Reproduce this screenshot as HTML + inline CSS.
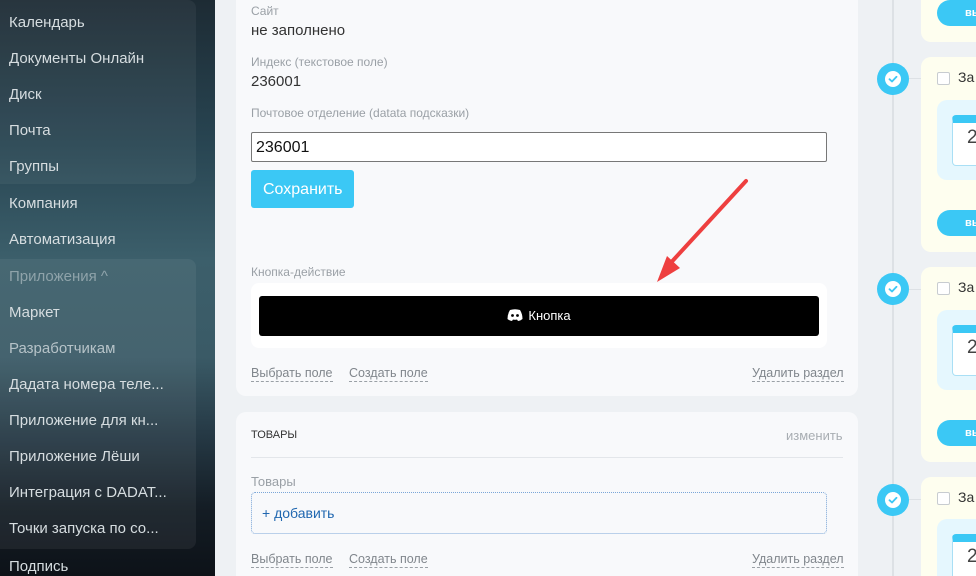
<!DOCTYPE html>
<html><head><meta charset="utf-8"><style>
*{box-sizing:border-box;margin:0;padding:0}
html,body{width:976px;height:576px;overflow:hidden}
body{background:#eef1f4;font-family:"Liberation Sans",sans-serif;position:relative}
#sb{position:absolute;left:0;top:0;width:215px;height:576px;background:linear-gradient(180deg,#1d2b34 0%,#284552 25%,#3c5f6b 45%,#3a5a66 62%,#263a46 75%,#141d25 88%,#0d1218 100%)}
.pan{position:absolute;left:0;width:196px;background:rgba(255,255,255,0.05);border-radius:0 8px 8px 0}
.si{position:absolute;left:9px;font-size:15px;color:#d6dde0;white-space:nowrap}
.card{position:absolute;left:236px;width:622px;background:#f8f9fb;border-radius:10px}
.lbl{position:absolute;left:251px;font-size:12px;color:#9aa0a6}
.val{position:absolute;left:251px;font-size:15px;color:#333}
.lnk{position:absolute;font-size:12.5px;color:#80868c;border-bottom:1px dashed #9aa0a6;line-height:15px}
.yc{position:absolute;left:921px;width:80px;background:#fefeef;border-radius:10px}
.circ{position:absolute;left:877px;width:32px;height:32px;border-radius:50%;background:#3bc8f5}
.circ svg{position:absolute;left:7px;top:7px}
.bb{position:absolute;left:937px;width:60px;height:26px;border-radius:13px;background:#3bc8f5;color:#fff;font-size:11px;font-weight:bold;padding:7px 0 0 28px}
.cb{position:absolute;left:937px;width:13px;height:13px;border:1px solid #c8ccd0;border-radius:2px;background:#fff}
.za{position:absolute;left:958px;font-size:14px;color:#333}
.ib{position:absolute;left:937px;width:60px;height:80px;background:#e5f7fe;border-radius:10px}
.cal{position:absolute;left:952px;width:40px;height:51px;border:1px solid #a9dff5;border-top:8px solid #3bc8f5;border-radius:4px;background:#fff;font-size:19px;color:#444;padding:5px 0 0 14px;line-height:19px}
</style></head><body>
<div id="sb">
<div class="pan" style="top:0;height:184px"></div>
<div class="pan" style="top:259px;height:290px;background:rgba(255,255,255,0.06)"></div>
<div class="si" style="top:14px">Календарь</div>
<div class="si" style="top:50px">Документы Онлайн</div>
<div class="si" style="top:86px">Диск</div>
<div class="si" style="top:122px">Почта</div>
<div class="si" style="top:158px">Группы</div>
<div class="si" style="top:195px">Компания</div>
<div class="si" style="top:231px">Автоматизация</div>
<div class="si" style="top:268px;color:#8fa3aa">Приложения ^</div>
<div class="si" style="top:304px">Маркет</div>
<div class="si" style="top:340px;color:#b6c3c8">Разработчикам</div>
<div class="si" style="top:376px">Дадата номера теле...</div>
<div class="si" style="top:412px">Приложение для кн...</div>
<div class="si" style="top:448px">Приложение Лёши</div>
<div class="si" style="top:484px">Интеграция с DADAT...</div>
<div class="si" style="top:520px">Точки запуска по со...</div>
<div class="si" style="top:558px">Подпись</div>
</div>

<div class="card" style="top:-10px;height:406px"></div>
<div class="lbl" style="top:4px">Сайт</div>
<div class="val" style="top:22px">не заполнено</div>
<div class="lbl" style="top:55px">Индекс (текстовое поле)</div>
<div class="val" style="top:73px">236001</div>
<div class="lbl" style="top:106px">Почтовое отделение (datata подсказки)</div>
<div style="position:absolute;left:251px;top:132px;width:576px;height:30px;border:1px solid #777;border-radius:2px;background:#fff;font-size:16px;color:#111;padding:6px 4px">236001</div>
<div style="position:absolute;left:251px;top:170px;width:103px;height:38px;border-radius:3px;background:#3bc8f5;color:#fff;font-size:16px;padding:11px 0 0 12px">Сохранить</div>
<svg style="position:absolute;left:0;top:0" width="976" height="576"><line x1="746" y1="181" x2="666" y2="268" stroke="#ee3f3f" stroke-width="4" stroke-linecap="round"/><polygon points="657,282 667,256 680,268" fill="#ee3f3f"/></svg>
<div class="lbl" style="top:265px">Кнопка-действие</div>
<div style="position:absolute;left:251px;top:283px;width:576px;height:65px;background:#fff;border-radius:8px"></div>
<div style="position:absolute;left:259px;top:296px;width:560px;height:40px;background:#000;border-radius:3px;color:#fff;font-size:13px;text-align:center;line-height:40px"><svg width="16" height="12" viewBox="0 0 16 12" style="vertical-align:-1px;margin-right:5px"><path d="M3 1 Q8 -0.5 13 1 Q15.5 5 15.5 10 Q13.5 11.8 11 12 L10 10.5 Q8 11 6 10.5 L5 12 Q2.5 11.8 0.5 10 Q0.5 5 3 1Z" fill="#fff"/><circle cx="5.5" cy="6.5" r="1.4" fill="#000"/><circle cx="10.5" cy="6.5" r="1.4" fill="#000"/></svg>Кнопка</div>
<div class="lnk" style="left:251px;top:366px">Выбрать поле</div>
<div class="lnk" style="left:349px;top:366px">Создать поле</div>
<div class="lnk" style="left:752px;top:366px">Удалить раздел</div>

<div class="card" style="top:412px;height:180px"></div>
<div style="position:absolute;left:251px;top:429px;font-size:11px;color:#333">ТОВАРЫ</div>
<div style="position:absolute;left:786px;top:428px;font-size:13px;color:#a8adb2">изменить</div>
<div style="position:absolute;left:251px;top:457px;width:592px;height:1px;background:#e3e6ea"></div>
<div class="lbl" style="top:474px;font-size:13px">Товары</div>
<div style="position:absolute;left:251px;top:492px;width:576px;height:42px;border:1px dotted #7aa6d8;border-radius:4px;font-size:14px;color:#2067b0;padding:12px 0 0 10px">+ добавить</div>
<div class="lnk" style="left:251px;top:552px">Выбрать поле</div>
<div class="lnk" style="left:349px;top:552px">Создать поле</div>
<div class="lnk" style="left:752px;top:552px">Удалить раздел</div>

<div style="position:absolute;left:892px;top:0;width:2px;height:576px;background:#dde1e5"></div>
<div style="position:absolute;left:909px;top:78px;width:12px;height:1px;background:#dde1e5"></div>
<div style="position:absolute;left:909px;top:289px;width:12px;height:1px;background:#dde1e5"></div>
<div style="position:absolute;left:909px;top:499px;width:12px;height:1px;background:#dde1e5"></div>
<div class="yc" style="top:-10px;height:52px"></div>
<div class="bb" style="top:0">вы</div>
<div class="yc" style="top:57px;height:195px"></div>
<div class="yc" style="top:267px;height:195px"></div>
<div class="yc" style="top:477px;height:120px"></div>
<div class="circ" style="top:63px"><svg width="18" height="18"><circle cx="9" cy="9" r="8" fill="#fff"/><path d="M5.5 9.2 L8 11.5 L12.5 6.8" stroke="#3bc8f5" stroke-width="1.8" fill="none" stroke-linecap="round" stroke-linejoin="round"/></svg></div>
<div class="circ" style="top:273px"><svg width="18" height="18"><circle cx="9" cy="9" r="8" fill="#fff"/><path d="M5.5 9.2 L8 11.5 L12.5 6.8" stroke="#3bc8f5" stroke-width="1.8" fill="none" stroke-linecap="round" stroke-linejoin="round"/></svg></div>
<div class="circ" style="top:484px"><svg width="18" height="18"><circle cx="9" cy="9" r="8" fill="#fff"/><path d="M5.5 9.2 L8 11.5 L12.5 6.8" stroke="#3bc8f5" stroke-width="1.8" fill="none" stroke-linecap="round" stroke-linejoin="round"/></svg></div>
<div class="cb" style="top:72px"></div><div class="za" style="top:69px">За</div>
<div class="ib" style="top:100px"></div><div class="cal" style="top:115px">2</div>
<div class="bb" style="top:210px">вы</div>
<div class="cb" style="top:282px"></div><div class="za" style="top:279px">За</div>
<div class="ib" style="top:310px"></div><div class="cal" style="top:325px">2</div>
<div class="bb" style="top:420px">вы</div>
<div class="cb" style="top:492px"></div><div class="za" style="top:489px">За</div>
<div class="ib" style="top:519px"></div><div class="cal" style="top:534px">2</div>
</body></html>
